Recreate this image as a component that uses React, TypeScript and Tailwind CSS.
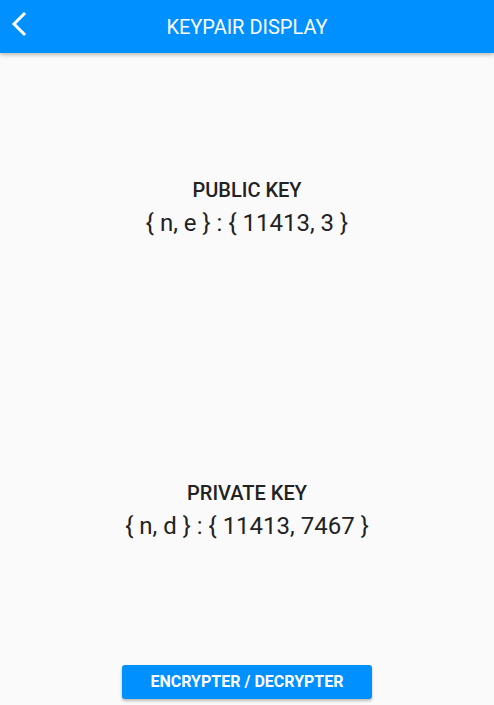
const KeySection = ({ label, value }: { label: string; value: string }) => (
  <div className="flex flex-col items-center">
    <h2 className="text-[20px] font-medium leading-[28px] text-[#222]">{label}</h2>
    <p className="mt-[3px] text-[24px] leading-[32px] text-[#222]">{value}</p>
  </div>
);

export default function App() {
  return (
    <div
      className="flex h-[705px] w-full flex-col bg-[#fafafa]"
      style={{ fontFamily: "Roboto, 'Liberation Sans', sans-serif" }}
    >
      <header className="relative flex h-[53px] shrink-0 items-center justify-center bg-[#0090ff] shadow-[0_2px_4px_rgba(0,0,0,0.25)]">
        <button className="absolute left-[10px] top-[12px] text-white">
          <svg width="18" height="25" viewBox="0 0 18 25" fill="none">
            <polyline
              points="14,2 4,12 14,22"
              stroke="currentColor"
              strokeWidth="3"
              strokeLinecap="square"
              strokeLinejoin="miter"
            />
          </svg>
        </button>
        <h1 className="text-[20px] text-white">KEYPAIR DISPLAY</h1>
      </header>

      <main className="flex flex-1 flex-col justify-around py-[3px]">
        <KeySection label="PUBLIC KEY" value="{ n, e } : { 11413, 3 }" />
        <KeySection label="PRIVATE KEY" value="{ n, d } : { 11413, 7467 }" />
      </main>

      <div className="flex justify-center pb-[6px]">
        <button className="h-[34px] w-[250px] rounded-[3px] bg-[#0090ff] text-[16px] font-bold text-white shadow-[0_2px_3px_rgba(0,0,0,0.25)]">
          ENCRYPTER / DECRYPTER
        </button>
      </div>
    </div>
  );
}
